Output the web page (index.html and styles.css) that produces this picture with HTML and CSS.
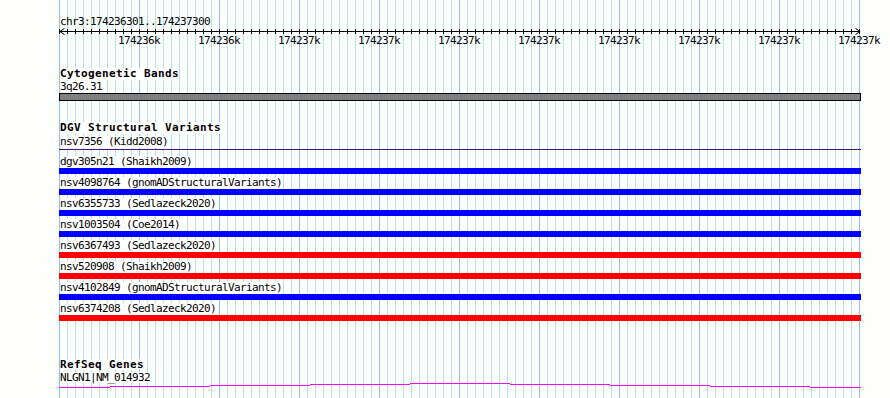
FILE: index.html
```html
<!DOCTYPE html>
<html lang="en">

<head>
    <meta charset="UTF-8">
    <title>Genome browser - chr3:174236301..174237300</title>
    <link rel="stylesheet" href="styles.css">
</head>

<body>
    <div class="browser">
        <div class="ruler">
            <div class="loc">chr3:174236301..174237300</div>
            <svg class="axis" width="802" height="7">
                <defs>
                    <pattern id="tick" width="8" height="7" patternUnits="userSpaceOnUse">
                        <rect x="0" y="2" width="1" height="5" fill="#000"/>
                    </pattern>
                </defs>
                <rect x="0" y="0" width="801" height="7" fill="url(#tick)"/>
                <rect x="0" y="4" width="801" height="1" fill="#000"/>
                <path d="M5.5 1.5 L0.8 4.5 L5.5 7.5" fill="none" stroke="#000"/>
                <path d="M796.5 1.5 L801.2 4.5 L796.5 7.5" fill="none" stroke="#000"/>
            </svg>
            <div class="ticks">
                <span>174236k</span>
                <span>174236k</span>
                <span>174237k</span>
                <span>174237k</span>
                <span>174237k</span>
                <span>174237k</span>
                <span>174237k</span>
                <span>174237k</span>
                <span>174237k</span>
                <span>174237k</span>
            </div>
        </div>

        <section class="track cyto">
            <div class="track-label">Cytogenetic Bands</div>
            <div class="feat-label">3q26.31</div>
            <div class="band"></div>
        </section>

        <section class="track dgv">
            <div class="track-label">DGV Structural Variants</div>
            <div class="feat-label">nsv7356 (Kidd2008)</div>
            <div class="thin-line"></div>
            <div class="sv"><div class="feat-label">dgv305n21 (Shaikh2009)</div><div class="bar gain"></div></div>
            <div class="sv"><div class="feat-label">nsv4098764 (gnomADStructuralVariants)</div><div class="bar gain"></div></div>
            <div class="sv"><div class="feat-label">nsv6355733 (Sedlazeck2020)</div><div class="bar gain"></div></div>
            <div class="sv"><div class="feat-label">nsv1003504 (Coe2014)</div><div class="bar gain"></div></div>
            <div class="sv"><div class="feat-label">nsv6367493 (Sedlazeck2020)</div><div class="bar loss"></div></div>
            <div class="sv"><div class="feat-label">nsv520908 (Shaikh2009)</div><div class="bar loss"></div></div>
            <div class="sv"><div class="feat-label">nsv4102849 (gnomADStructuralVariants)</div><div class="bar gain"></div></div>
            <div class="sv"><div class="feat-label">nsv6374208 (Sedlazeck2020)</div><div class="bar loss"></div></div>
        </section>

        <section class="track refseq">
            <div class="track-label">RefSeq Genes</div>
            <div class="feat-label">NLGN1|NM_014932</div>
            <svg class="gene" width="802" height="5">
                <rect x="0" y="4" width="51" height="1" fill="#ff00ff"/>
                <rect x="51" y="3" width="100" height="1" fill="#ff00ff"/>
                <rect x="151" y="2" width="100" height="1" fill="#ff00ff"/>
                <rect x="251" y="1" width="100" height="1" fill="#ff00ff"/>
                <rect x="351" y="0" width="100" height="1" fill="#ff00ff"/>
                <rect x="451" y="1" width="100" height="1" fill="#ff00ff"/>
                <rect x="551" y="2" width="100" height="1" fill="#ff00ff"/>
                <rect x="651" y="3" width="100" height="1" fill="#ff00ff"/>
                <rect x="751" y="4" width="51" height="1" fill="#ff00ff"/>
            </svg>
        </section>
    </div>
</body>

</html>
```

FILE: styles.css
```css
body {
    margin: 0;
    background-color: #fdfffd;
    color: #000;
    font-family: "DejaVu Sans Mono", "Liberation Mono", monospace;
    font-size: 11px;
    line-height: 12px;
    letter-spacing: -0.62px;
}

/* grid: major line every 80px, minor every 8px */
.browser {
    margin-left: 59px;
    width: 802px;
    height: 398px;
    background-image:
        linear-gradient(to right, #8fc0e0 1px, transparent 1px),
        linear-gradient(to right, #b2e4e6 1px, transparent 1px);
    background-size: 80px 100%, 8px 100%;
}

.loc {
    padding-top: 16px;
    padding-left: 1px;
    height: 11px;
}

.axis {
    display: block;
    overflow: visible;
}

.ticks {
    display: flex;
    padding-top: 1px;
    padding-left: 40px;
    height: 12px;
    white-space: nowrap;
}

.ticks span {
    flex: none;
    width: 80px;
    text-align: center;
}

.track-label {
    width: fit-content;
    margin-left: 1px;
    background-color: #fff;
    font-weight: bold;
    letter-spacing: 0.38px;
}

.feat-label {
    width: fit-content;
    margin-left: 1px;
    background-color: #fff;
    white-space: nowrap;
}

.cyto {
    padding-top: 21px;
}

.cyto .feat-label {
    margin-top: 1px;
}

.band {
    height: 8px;
    box-sizing: border-box;
    border: 1px solid #000;
    background-color: #808080;
}

.dgv {
    padding-top: 21px;
}

.dgv > .feat-label {
    margin-top: 2px;
}

.thin-line {
    margin-top: 1px;
    margin-bottom: 3px;
    height: 1px;
    background-color: #48107a;
}

.sv {
    padding-top: 3px;
}

.bar {
    height: 6px;
}

.bar.gain {
    background-color: #0000ff;
}

.bar.loss {
    background-color: #ff0000;
}

.refseq {
    padding-top: 38px;
}

.refseq .track-label,
.refseq .feat-label {
    line-height: 11px;
}

.refseq .feat-label {
    margin-top: 2px;
}

.gene {
    display: block;
}
```
